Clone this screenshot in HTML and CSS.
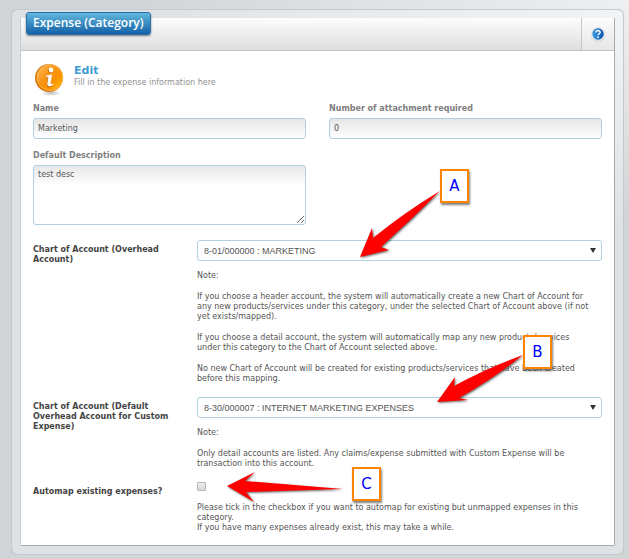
FILE: index.html
```html
<!DOCTYPE html>
<html lang="en">
<head>
    <meta charset="UTF-8">
    <meta name="viewport" content="width=device-width, initial-scale=1.0">
    <title>Expense (Category)</title>
    <link rel="stylesheet" href="styles.css">
</head>
<body>
    <main class="frame">
        <form class="panel">
            <header class="panel-header">
                <h1 class="title">Expense (Category)</h1>
                <a class="help" href="#help" aria-label="Help">
                    <svg width="16" height="17" viewBox="0 0 16 17">
                        <defs>
                            <linearGradient id="blue" x1="0" y1="0" x2="1" y2="0">
                                <stop offset="0" stop-color="#3f9be4"/>
                                <stop offset="1" stop-color="#0a52ad"/>
                            </linearGradient>
                        </defs>
                        <circle cx="8" cy="9" r="7" fill="#d4d4d2"/>
                        <circle cx="8" cy="8" r="7" fill="#e6e6e4"/>
                        <circle cx="8" cy="8" r="5.7" fill="url(#blue)"/>
                        <path d="M6.1 6.5C6.1 4 10.2 4 10.1 6.4C10 7.8 8.2 7.7 8.2 9.3" fill="none" stroke="#fff" stroke-width="1.5"/>
                        <circle cx="8.1" cy="11.2" r="0.9" fill="#fff"/>
                    </svg>
                </a>
            </header>

            <div class="content">
                <div class="intro">
                    <svg width="32" height="34" viewBox="0 0 32 34">
                        <defs>
                            <linearGradient id="orange" x1="0" y1="0" x2="1" y2="1">
                                <stop offset="0" stop-color="#ffc163"/>
                                <stop offset="0.4" stop-color="#f89518"/>
                                <stop offset="0.65" stop-color="#fb9200"/>
                                <stop offset="1" stop-color="#ffc61c"/>
                            </linearGradient>
                            <radialGradient id="ground">
                                <stop offset="0" stop-color="#bbb"/>
                                <stop offset="1" stop-color="#fff"/>
                            </radialGradient>
                        </defs>
                        <ellipse cx="17" cy="30" rx="10" ry="3" fill="url(#ground)"/>
                        <circle cx="15" cy="15" r="14" fill="#d87808"/>
                        <circle cx="16" cy="14.5" r="13" fill="url(#orange)" stroke="#ffc978" stroke-width="0.6"/>
                        <circle cx="16.5" cy="7.5" r="2.5" fill="#b96a0d"/>
                        <path d="M12 13.5L17.5 12L16 21.5Q16.5 22.5 19 21L18.5 23Q13 26 12.5 22L13.8 15L12 15Z" fill="#b96a0d"/>
                        <circle cx="17" cy="7" r="2.4" fill="#fff"/>
                        <path d="M12.3 12.8L18 11.5L16.6 20.5Q17 21.8 19.5 20.2L19 22Q13.8 25 13.2 21.2L14.4 14.2L12.3 14.3Z" fill="#fff"/>
                    </svg>
                    <div>
                        <h2 class="intro-title">Edit</h2>
                        <p class="intro-text">Fill in the expense information here</p>
                    </div>
                </div>

                <div class="fields">
                    <div class="field">
                        <label for="name">Name</label>
                        <input class="control" id="name" type="text" value="Marketing">
                    </div>
                    <div class="field">
                        <label for="attachments">Number of attachment required</label>
                        <input class="control" id="attachments" type="text" value="0">
                    </div>
                    <div class="field">
                        <label for="description">Default Description</label>
                        <textarea class="control area" id="description">test desc</textarea>
                    </div>
                </div>

                <div class="row row-overhead">
                    <label class="row-label" for="overhead">Chart of Account (Overhead Account)</label>
                    <div class="row-body">
                        <div class="select-wrap">
                            <select class="control select" id="overhead">
                                <option>8-01/000000 : MARKETING</option>
                            </select>
                        </div>
                        <p class="note">Note:</p>
                        <p>If you choose a header account, the system will automatically create a new Chart of Account for<br>any new products/services under this category, under the selected Chart of Account above (if not<br>yet exists/mapped).</p>
                        <p>If you choose a detail account, the system will automatically map any new products/services<br>under this category to the Chart of Account selected above.</p>
                        <p>No new Chart of Account will be created for existing products/services that have been created<br>before this mapping.</p>
                    </div>
                </div>

                <div class="row">
                    <label class="row-label" for="custom">Chart of Account (Default<br>Overhead Account for Custom<br>Expense)</label>
                    <div class="row-body">
                        <div class="select-wrap">
                            <select class="control select" id="custom">
                                <option>8-30/000007 : INTERNET MARKETING EXPENSES</option>
                            </select>
                        </div>
                        <p class="note">Note:</p>
                        <p>Only detail accounts are listed. Any claims/expense submitted with Custom Expense will be<br>transaction into this account.</p>
                    </div>
                </div>

                <div class="row">
                    <label class="row-label" for="automap">Automap existing expenses?</label>
                    <div class="row-body">
                        <input class="tick" id="automap" type="checkbox">
                        <p class="tick-note">Please tick in the checkbox if you want to automap for existing but unmapped expenses in this<br>category.<br>If you have many expenses already exist, this may take a while.</p>
                    </div>
                </div>
            </div>
        </form>
    </main>

    <!-- Callouts over the form -->
    <svg class="arrows" width="629" height="559" viewBox="0 0 629 559" aria-hidden="true">
        <path d="M360 257L372 228L373 238Q405 212 440 191Q412 219 381 247L389 250Z"/>
        <path d="M437 402L455 377L454 386Q487 368 523 355Q493 379 459 398L468 400Z"/>
        <path d="M227 486L255 472L245 481L343 489L246 492L254 502Z"/>
    </svg>
    <div class="callout callout-a">A</div>
    <div class="callout callout-b">B</div>
    <div class="callout callout-c">C</div>
</body>
</html>
```
FILE: styles.css
```css
* {
    box-sizing: border-box;
}

html {
    min-height: 100%;
    background: radial-gradient(ellipse 500px 220px at 100% 0, #eeeff0, rgba(238, 239, 240, 0)) no-repeat, #d2d5d7;
}

body {
    margin: 9px 5px 4px 11px;
    font-family: "DejaVu Sans", Verdana, sans-serif;
    font-size: 8px;
    line-height: 10px;
    color: #555;
}

h1, h2, p {
    margin: 0;
}

.frame {
    padding: 8px;
    border: 1px solid #c6c9cb;
    border-radius: 7px;
    background: radial-gradient(ellipse 500px 220px at 100% 0, #f2f3f4, rgba(242, 243, 244, 0)) no-repeat, #dfe2e4;
    box-shadow: 0 0 2px #bbb;
}

.panel {
    background: #fff;
    border-right: 1px solid #aaa;
    border-bottom: 1px solid #aaa;
    border-left: 1px solid #ccc;
    border-radius: 0 0 2px 2px;
}

.panel-header {
    display: flex;
    justify-content: space-between;
    height: 33px;
    padding-left: 5px;
    background: linear-gradient(#fdfdfd, #dedede);
    border-bottom: 1px solid #c4c4c4;
}

.title {
    height: 23px;
    margin-top: -6px;
    padding: 0 6px;
    border: 1px solid #2b70ac;
    border-radius: 3px;
    background: linear-gradient(#61b8dd, #1460a7);
    box-shadow: 0 1px 2px #777;
    font: 600 12px/20px "Open Sans", sans-serif;
    color: #fff;
}

.help {
    display: flex;
    align-items: center;
    justify-content: center;
    width: 33px;
    border-left: 1px solid #c8c8c8;
    background: linear-gradient(#fcfcfc, #e6e6e6);
}

.content {
    padding: 12px 12px 12px;
}

.intro {
    display: flex;
    gap: 8px;
    height: 41px;
    padding-left: 1px;
}

.intro-title {
    margin-top: 2px;
    font-size: 11px;
    line-height: 12px;
    color: #3d9bd3;
}

.intro-text {
    margin-top: 1px;
    color: #909090;
}

.fields {
    display: grid;
    grid-template-columns: 1fr 1fr;
    gap: 12px 23px;
}

.field {
    display: flex;
    flex-direction: column;
    gap: 4px;
    font-weight: bold;
    color: #808080;
}

.control {
    width: 100%;
    height: 21px;
    padding: 0 4px;
    border: 1px solid #b0d1e1;
    border-radius: 3px;
    background: linear-gradient(#e5e5e5, #fff);
    font: 8px/10px "DejaVu Sans", Verdana, sans-serif;
    color: #555;
}

.area {
    display: block;
    height: 60px;
    padding: 4px;
    background: linear-gradient(#e8e8e8, #fff 20px);
    resize: vertical;
}

.row {
    display: grid;
    grid-template-columns: 146px 1fr;
    gap: 18px;
    margin-top: 13px;
}

.row-overhead {
    margin-top: 15px;
}

.row-label {
    padding-top: 5px;
    font-weight: bold;
    color: #444;
}

.row-body p {
    margin-top: 11px;
}

.row-body .note {
    margin-top: 10px;
}

.select-wrap {
    position: relative;
}

.select-wrap::after {
    content: "";
    position: absolute;
    top: 8px;
    right: 6px;
    border-top: 5px solid #333;
    border-right: 3px solid transparent;
    border-left: 3px solid transparent;
}

.select {
    display: block;
    padding: 0 6px;
    appearance: none;
    background: #fff;
    font: 9px/18px "Liberation Sans", Arial, sans-serif;
}

.tick {
    display: block;
    width: 9px;
    height: 9px;
    margin: 0;
    appearance: none;
    border: 1px solid #b5b5b5;
    border-radius: 1px;
    background: linear-gradient(#eee, #d8d8d8);
}

.row-body .tick-note {
    margin-top: 12px;
}

.arrows {
    position: absolute;
    top: 0;
    left: 0;
    pointer-events: none;
    fill: #f00;
    filter: drop-shadow(1px 1px 1px rgba(0, 0, 0, 0.6));
}

.callout {
    position: absolute;
    width: 29px;
    height: 34px;
    border: 2px solid #ff8500;
    background: #fff;
    box-shadow: 1px 2px 2px rgba(0, 0, 0, 0.5);
    font-size: 15px;
    line-height: 30px;
    text-align: center;
    color: #00f;
}

.callout-a {
    top: 169px;
    left: 440px;
}

.callout-b {
    top: 335px;
    left: 523px;
}

.callout-c {
    top: 467px;
    left: 352px;
}
```
